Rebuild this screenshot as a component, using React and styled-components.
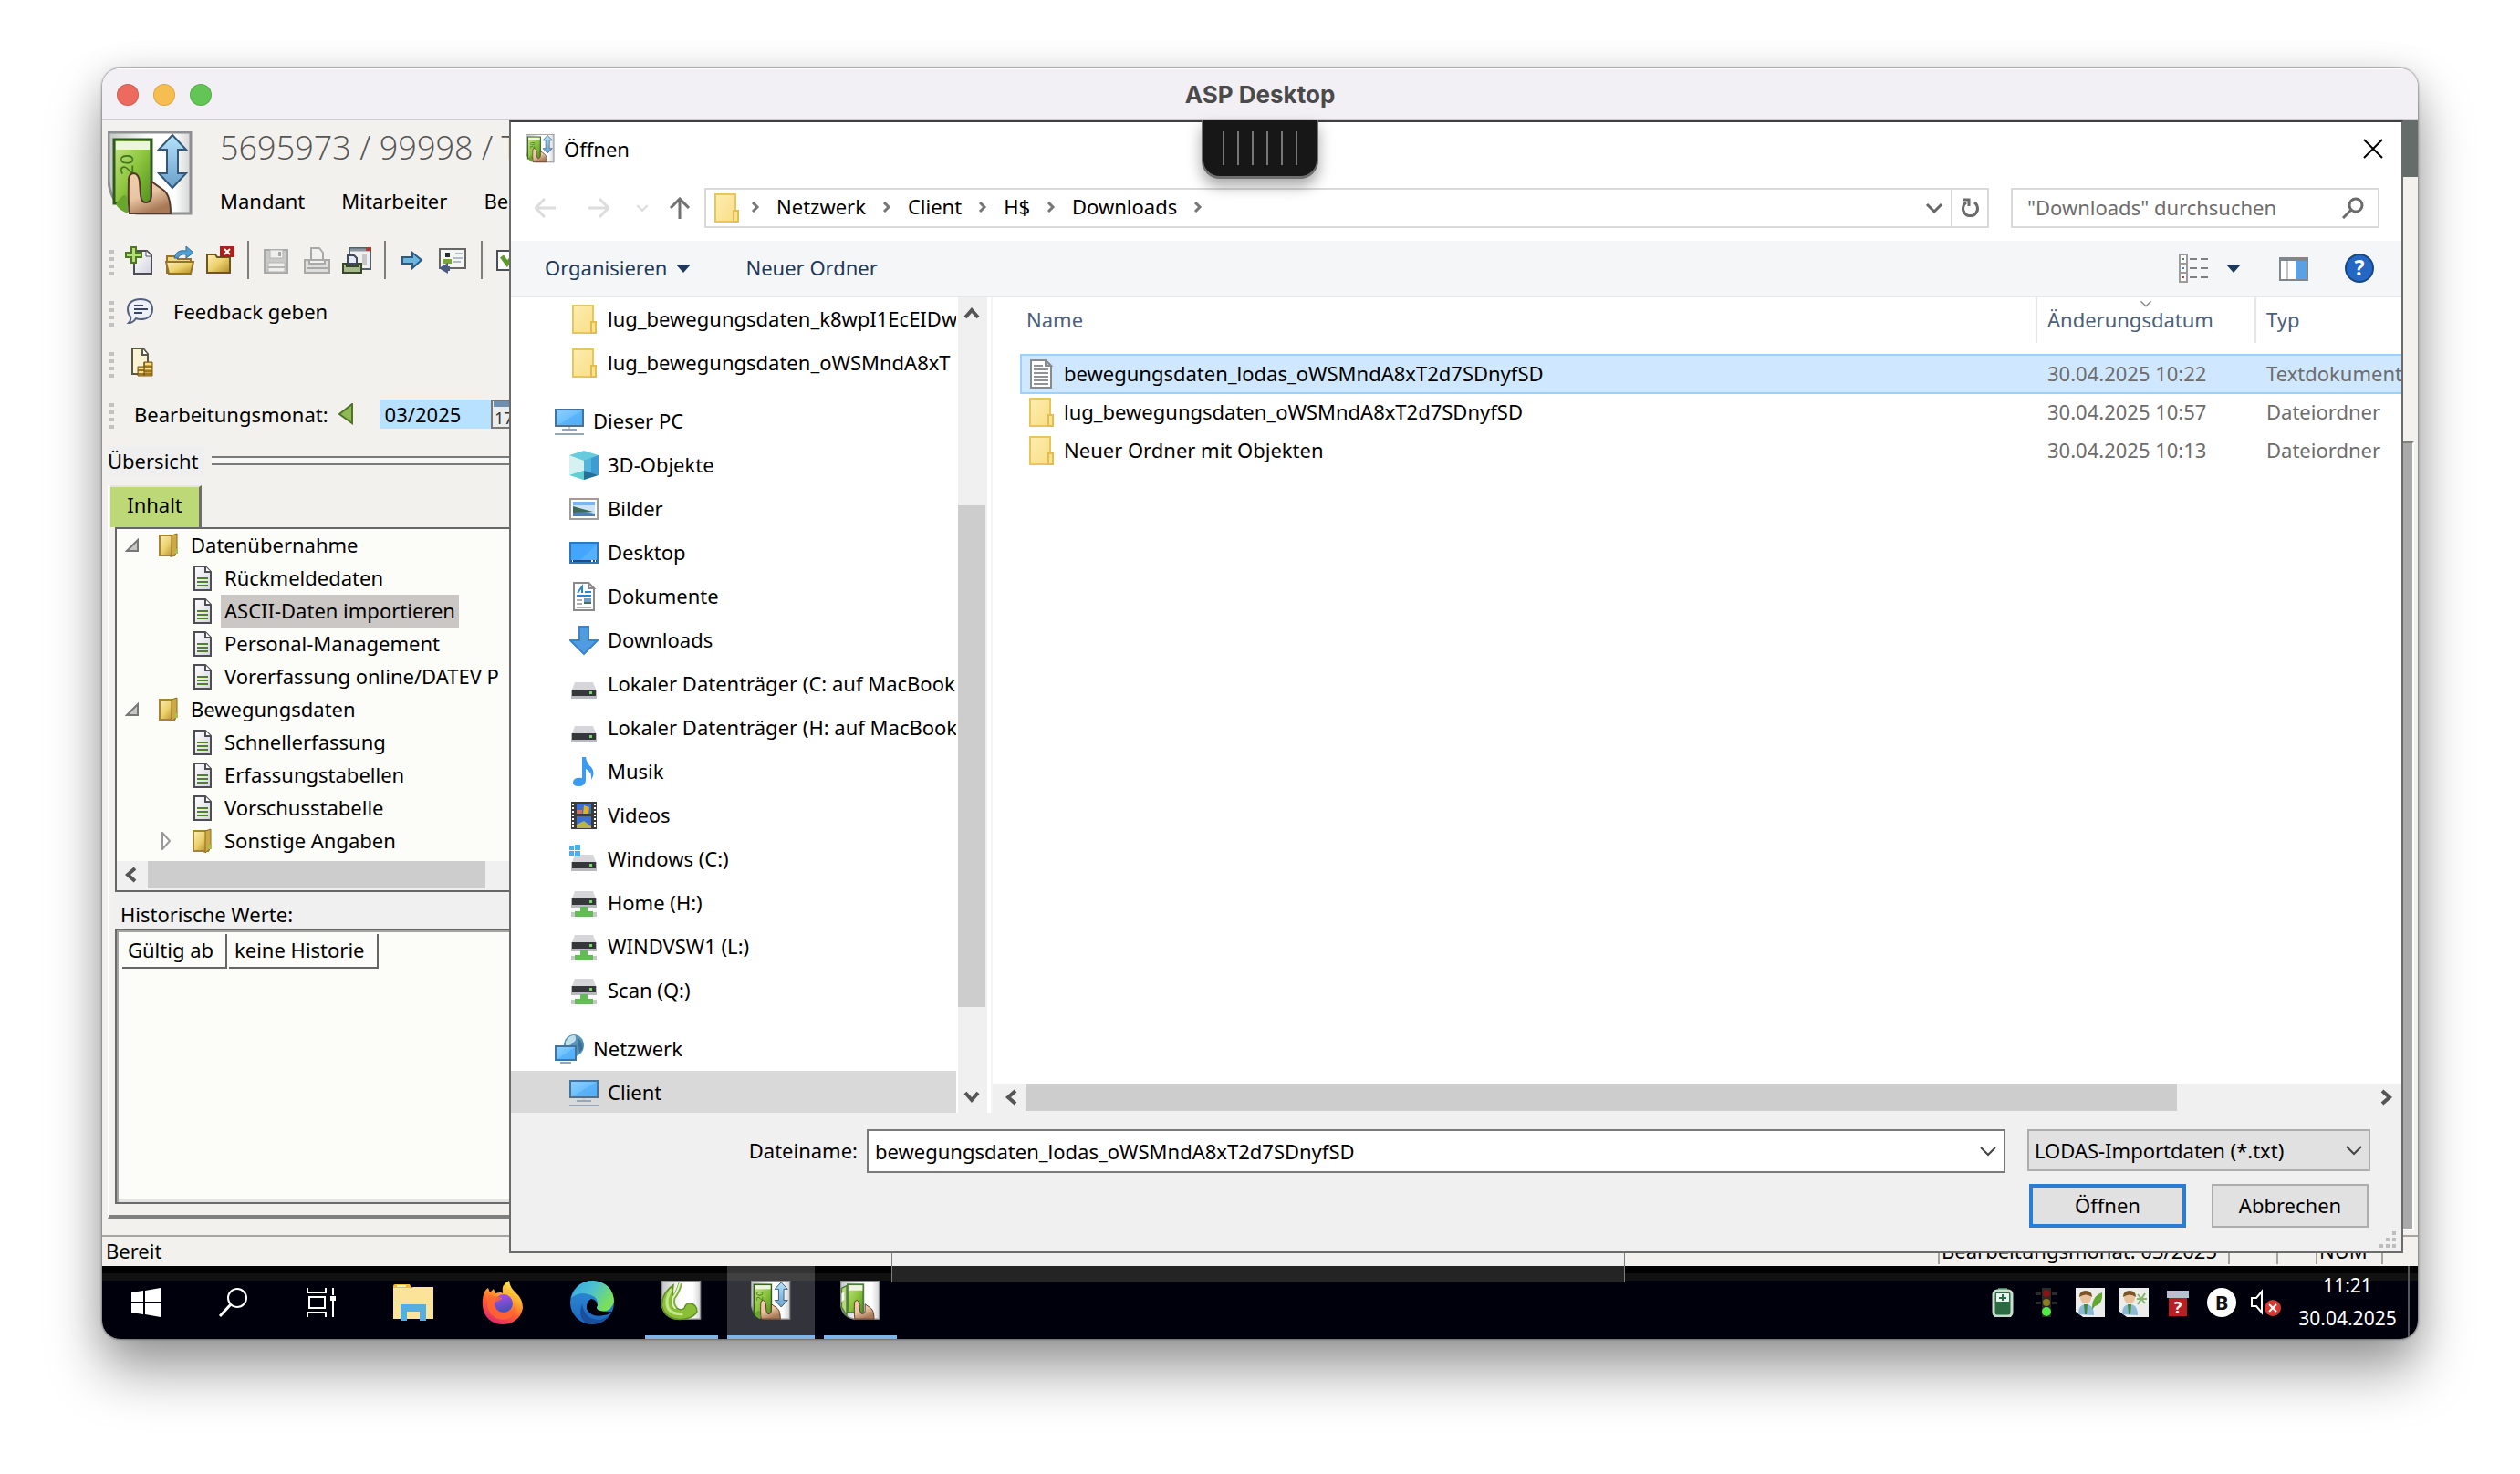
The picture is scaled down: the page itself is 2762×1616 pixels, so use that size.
import React from "react";
import styled, { createGlobalStyle, css } from "styled-components";

const UI_FONT = `"Noto Sans", "Open Sans", sans-serif`;

const GlobalStyle = createGlobalStyle`
  *, *::before, *::after { box-sizing: border-box; }
  body {
    margin: 0;
    background: #fff;
    font-family: ${UI_FONT};
    font-size: 22px;
    line-height: 32px;
    color: #000;
  }
  button, input, select {
    font: inherit;
    color: inherit;
    margin: 0;
    padding: 0;
    border: 0;
    border-radius: 0;
    background: none;
    outline: none;
  }
  ul { margin: 0; padding: 0; list-style: none; }
  svg { display: block; flex: none; }
`;

/* ---------- Icons ---------- */

const Defs = () => (
  <svg width="0" height="0" style={{ position: "absolute" }} aria-hidden="true">
    <defs>
      <linearGradient id="note" x1="0" y1="0" x2="1" y2="1">
        <stop offset="0" stopColor="#c5e48a" />
        <stop offset="0.5" stopColor="#8fc63f" />
        <stop offset="1" stopColor="#4f8f1e" />
      </linearGradient>
      <linearGradient id="skin" x1="0" y1="0" x2="0.4" y2="1">
        <stop offset="0" stopColor="#f3cfae" />
        <stop offset="0.6" stopColor="#e8c4a2" />
        <stop offset="1" stopColor="#a97a58" />
      </linearGradient>
      <linearGradient id="steel" x1="0" y1="0" x2="1" y2="0">
        <stop offset="0" stopColor="#c6c7c7" />
        <stop offset="0.5" stopColor="#ffffff" />
        <stop offset="0.8" stopColor="#ffffff" />
        <stop offset="1" stopColor="#d4d5d6" />
      </linearGradient>
      <linearGradient id="sky" x1="0" y1="0" x2="0" y2="1">
        <stop offset="0" stopColor="#b5e3fb" />
        <stop offset="1" stopColor="#6a9fc9" />
      </linearGradient>
      <linearGradient id="gold" x1="0" y1="0" x2="1" y2="1">
        <stop offset="0" stopColor="#fbeebb" />
        <stop offset="0.5" stopColor="#ecd16c" />
        <stop offset="1" stopColor="#b08a2a" />
      </linearGradient>
      <linearGradient id="paper" x1="0" y1="0" x2="1" y2="1">
        <stop offset="0" stopColor="#ffffff" />
        <stop offset="1" stopColor="#d3d3e0" />
      </linearGradient>
      <linearGradient id="folder" x1="0" y1="0" x2="1" y2="1">
        <stop offset="0" stopColor="#ffedb0" />
        <stop offset="1" stopColor="#f8de86" />
      </linearGradient>
      <linearGradient id="screen" x1="0" y1="0" x2="1" y2="1">
        <stop offset="0" stopColor="#8fd0ff" />
        <stop offset="0.5" stopColor="#6fc0fd" />
        <stop offset="0.52" stopColor="#5ab4fa" />
        <stop offset="1" stopColor="#4fadf8" />
      </linearGradient>
      <linearGradient id="fox" x1="0.8" y1="0" x2="0.3" y2="1">
        <stop offset="0" stopColor="#fff15a" />
        <stop offset="0.35" stopColor="#ffb02e" />
        <stop offset="0.65" stopColor="#ff5a36" />
        <stop offset="1" stopColor="#e0266f" />
      </linearGradient>
      <linearGradient id="foxcore" x1="0" y1="0" x2="0.3" y2="1">
        <stop offset="0" stopColor="#b44df0" />
        <stop offset="1" stopColor="#4a4fb8" />
      </linearGradient>
      <linearGradient id="edgetop" x1="0" y1="0" x2="1" y2="0.5">
        <stop offset="0" stopColor="#36a8ea" />
        <stop offset="0.5" stopColor="#4cc0d0" />
        <stop offset="1" stopColor="#7be05a" />
      </linearGradient>
      <linearGradient id="edgeside" x1="0" y1="0" x2="0" y2="1">
        <stop offset="0" stopColor="#2f93dc" />
        <stop offset="1" stopColor="#1c64bd" />
      </linearGradient>
    </defs>
  </svg>
);

const hand = (
  <path
    d="M24 90C22 78 23 62 23 52Q24 46 29 46Q34 47 35 55L36 70Q37 79 43 78Q48 77 48 70V55L62 65Q69 71 69 90Z"
    fill="url(#skin)"
    stroke="#54382a"
    strokeWidth="2"
  />
);
const frame = <path d="M1 1H91V90H32Q3 84 1 54Z" fill="url(#steel)" stroke="#8e8f90" strokeWidth="3" />;
const folderTall = (
  <>
    <path d="M4 1H26V31H4Z" fill="url(#folder)" stroke="#e8c65c" strokeWidth="2" />
    <path d="M24 19H29V31H24Z" fill="#fae294" stroke="#e3bd4d" strokeWidth="2" />
  </>
);
const monitor = (
  <>
    <path d="M1 3H31V21H1Z" fill="url(#screen)" stroke="#42749e" strokeWidth="2" />
    <path d="M8 25H24M0 30H32" stroke="#96a5ba" strokeWidth="2" />
    <path d="M15 22H17V24H15Z" fill="#c5ccd6" />
  </>
);
const drive = (y) => (
  <g transform={`translate(0 ${y})`}>
    <path d="M6 0H26L29 8H3Z" fill="#d6d6da" />
    <path d="M2 8H30V18H2Z" fill="#b9babf" />
    <path d="M3 8H29V15H3Z" fill="#35373a" />
    <path d="M22 10H25V13H22Z" fill="#6fe05a" />
  </g>
);
const person = (
  <>
    <path d="M0 0H32V32H8L0 26Z" fill="#ececea" />
    <path d="M3 29Q3 18 11 18Q20 18 20 30Z" fill="#8bb8d8" />
    <path d="M9 18H13L12 29H10Z" fill="#3d8b37" />
    <circle cx="11" cy="11" r="6" fill="#e9c29c" />
    <path d="M4 10Q4 3 11 3Q18 3 18 10Q11 5 4 10Z" fill="#7a5326" />
  </>
);

const ART = {
  lodas: [94, (
    <>
      {frame}
      <rect x="7" y="9" width="41" height="70" fill="url(#note)" stroke="#2f5a1e" strokeWidth="3" />
      <rect x="9" y="11" width="37" height="9" fill="#eef5df" />
      <path d="M9 80Q24 56 22 90Q12 86 9 80Z" fill="#6aa62e" />
      <text x="0" y="0" transform="translate(28 48) rotate(-90)" fontSize="20" fill="#3f7720">20</text>
      {hand}
      <path d="M71 4L86 20H77V46H86L71 62L56 46H65V20H56Z" fill="url(#sky)" stroke="#35587a" strokeWidth="2" />
    </>
  )],
  lohn: [94, (
    <>
      {frame}
      <path d="M3 18L15 12V82L3 62Z" fill="#b5d87c" stroke="#4d7a33" strokeWidth="3" />
      <path d="M3 30L9 26V44L3 50Z" fill="#fff" />
      <rect x="17" y="9" width="37" height="66" fill="url(#note)" stroke="#4f7c43" strokeWidth="4" />
      <rect x="19" y="11" width="33" height="12" fill="#eef5df" />
      <g transform="translate(10 0)">{hand}</g>
    </>
  )],
  swirl: [94, (
    <>
      {frame}
      <path
        d="M28 10Q0 30 1 58Q6 88 42 91Q72 90 83 74Q84 58 70 54Q56 52 54 64Q46 72 36 64Q22 48 28 10Z"
        fill="#8abf35"
        stroke="#5d8f22"
        strokeWidth="3"
      />
      <path d="M24 20Q6 44 16 66Q26 80 50 78" fill="none" stroke="#c3e58a" strokeWidth="7" />
      <path d="M44 6Q40 26 28 40Q24 58 34 66" fill="none" stroke="#7fb040" strokeWidth="10" />
      <path d="M43 6Q38 26 27 40Q23 58 33 66" fill="none" stroke="#e6f4cc" strokeWidth="4" />
    </>
  )],
  newDoc: [32, (
    <>
      <path d="M10 6H24L29 11V31H10Z" fill="url(#paper)" stroke="#4d4d57" strokeWidth="2" />
      <path d="M23 6V12H29" fill="#fff" stroke="#4d4d57" />
      <path d="M7 2H12V8H18V13H12V19H7V13H1V8H7Z" fill="#b7dd7a" stroke="#4c7a1f" strokeWidth="2" />
    </>
  )],
  openFolder: [32, (
    <>
      <path d="M2 12H12L14 15H28V30H2Z" fill="#f0d67e" stroke="#94742a" strokeWidth="2" />
      <path d="M1 18H31L28 31H4Z" fill="url(#gold)" stroke="#94742a" strokeWidth="2" />
      <path d="M10 14Q12 4 23 6V1L31 8L23 14V10Q16 9 14 14Z" fill="#4ea0d4" stroke="#2b6c9c" />
    </>
  )],
  closeFolder: [32, (
    <>
      <path d="M2 10H11L13 13H27V30H2Z" fill="url(#gold)" stroke="#6f5616" strokeWidth="2" />
      <path d="M16 1H32V13H16Z" fill="#a91f1b" />
      <path d="M21 4L27 10M27 4L21 10" stroke="#fff" strokeWidth="2" />
    </>
  )],
  save: [32, (
    <>
      <path d="M3 5H28V30H3Z" fill="#c9c9c8" stroke="#a9a9a8" strokeWidth="2" />
      <path d="M9 5H23V14H9ZM7 19H25V29H7Z" fill="#efefee" stroke="#b5b5b4" />
      <path d="M18 7H21V12H18Z" fill="#a9a9a8" />
      <path d="M7 24H25" stroke="#b5b5b4" strokeWidth="2" />
    </>
  )],
  print: [32, (
    <>
      <path d="M10 16V3H19L23 8V16Z" fill="#f1f1f0" stroke="#a9a9a8" strokeWidth="2" />
      <path d="M3 16H8V20H25V16H30V30H3Z" fill="#dededd" stroke="#a9a9a8" strokeWidth="2" />
      <path d="M5 25H28" stroke="#a9a9a8" strokeWidth="2" />
    </>
  )],
  printPreview: [32, (
    <>
      <path d="M8 3H31V26H8Z" fill="#f0f0f0" stroke="#52606a" strokeWidth="2" />
      <path d="M9 5H30" stroke="#8c97a0" strokeWidth="3" />
      <path d="M26 2H32V6H26Z" fill="#b03a35" />
      <path d="M22 10H27V22H22Z" fill="#c6c6c6" />
      <path d="M6 20V11H13L16 14V20Z" fill="#e6ebf5" stroke="#3f485c" strokeWidth="2" />
      <path d="M1 20H5V23H17V20H21V30H1Z" fill="#a5b98a" stroke="#37472b" strokeWidth="2" />
    </>
  )],
  arrowRight: [32, (
    <path d="M4 13H15V8L25 16L15 25V20H4Z" fill="#6db5df" stroke="#2d5a80" strokeWidth="2" />
  )],
  card: [32, (
    <>
      <path d="M1 4H29V25H1Z" fill="#f4f6f4" stroke="#666" strokeWidth="2" />
      <path d="M7 8H12V13H7Z" fill="#262b35" />
      <path d="M5 15H14V20H5Z" fill="#79a63c" />
      <path d="M18 9H26M16 14H26M16 18H24" stroke="#b4bcc8" strokeWidth="2" />
      <path d="M0 25L10 19V23H12V28H10V31Z" fill="#4b5a80" />
    </>
  )],
  checkDoc: [32, (
    <>
      <path d="M2 6H28V27H2Z" fill="#fff" stroke="#4b4f57" strokeWidth="2" />
      <path d="M7 12L13 20L23 8" fill="none" stroke="#5f9a2d" strokeWidth="5" />
    </>
  )],
  feedback: [32, (
    <>
      <path
        d="M17 3C25 3 30 7 30 14C30 21 25 25 17 25Q14 25 12 24Q9 29 4 29Q7 26 6 22Q3 19 3 14C3 7 9 3 17 3Z"
        fill="#eef1f8"
        stroke="#55617f"
        strokeWidth="2"
      />
      <path d="M10 10H20M10 14H25M10 18H19" stroke="#3a4668" strokeWidth="2" />
    </>
  )],
  coins: [32, (
    <>
      <path d="M8 1H20L25 7V29H8Z" fill="#fbf4d4" stroke="#5c5848" strokeWidth="2" />
      <path d="M19 1V8H25" fill="#fff" stroke="#5c5848" strokeWidth="2" />
      <path d="M14 21H21V16H30V31H14Z" fill="#cda33a" stroke="#7b5c18" />
      <path d="M15 23H21M22 18H29M15 27H21M22 23H29" stroke="#f4df8e" strokeWidth="2" />
      <path d="M14 25H21M21 16V31M21 21H30M14 29H30M21 26H30" stroke="#6b4c0c" />
    </>
  )],
  triangleLeft: [24, <path d="M18 1V22L4 12Z" fill="#8dba55" stroke="#507527" strokeWidth="2" />],
  calendar: [32, (
    <>
      <path d="M1 1H31V31H1Z" fill="#ececec" stroke="#777" strokeWidth="2" />
      <path d="M3 2H30V8H3Z" fill="#6f8fae" />
      <text x="4" y="27" fontSize="18" fill="#333">17</text>
    </>
  )],
  treeFolder: [28, (
    <>
      <path d="M15 3L22 2V25L15 27Z" fill="#9cbf4e" />
      <path d="M4 3H20V25H4Z" fill="url(#gold)" stroke="#a58532" strokeWidth="2" />
      <path d="M17 3L23 1V22L17 27Z" fill="#cda943" stroke="#8c6d22" />
      <path d="M21 18H24V23H21Z" fill="#a4bf52" />
    </>
  )],
  treeDoc: [28, (
    <>
      <path d="M5 1H17L23 7V27H5Z" fill="url(#paper)" stroke="#4e4e52" strokeWidth="2" />
      <path d="M17 1V7H23" fill="#fff" stroke="#4e4e52" strokeWidth="2" />
      <path d="M8 14H20M8 18H20M8 22H20" stroke="#55802b" strokeWidth="2" />
    </>
  )],
  treeOpen: [16, <path d="M14 2V14H2Z" fill="#c7c7c5" stroke="#777" strokeWidth="2" />],
  treeClosed: [20, <path d="M6 1L14 10L6 19Z" fill="#fff" stroke="#999" strokeWidth="2" />],
  folder: [32, folderTall],
  monitor: [32, monitor],
  textFile: [32, (
    <>
      <path d="M5 1H21L27 7V31H5Z" fill="#fff" stroke="#8a8a8a" strokeWidth="2" />
      <path d="M21 1V7H27Z" fill="#ddd" stroke="#8a8a8a" strokeWidth="2" />
      <path d="M8 7H18M8 11H24M8 15H24M8 19H24M8 23H24M8 27H24" stroke="#8f9396" strokeWidth="2" />
    </>
  )],
  objects3d: [32, (
    <>
      <path d="M16 0L32 5V26L16 32L0 26V5Z" fill="#66cbdc" />
      <path d="M0 5L16 11V22L0 27Z" fill="#d5f1f2" />
      <path d="M32 5L16 11V22L32 27Z" fill="#3f9bd3" />
      <path d="M16 11V22L24 24V8Z" fill="#52b6dc" />
      <path d="M16 22L32 27L16 32Z" fill="#256f96" />
      <path d="M16 22L0 27L16 32Z" fill="#5fcfd2" />
    </>
  )],
  pictures: [32, (
    <>
      <path d="M1 5H31V27H1Z" fill="#fff" stroke="#9d9d9d" strokeWidth="2" />
      <path d="M4 8H28V24H4Z" fill="#cfe3f6" />
      <path d="M4 8H28V12H4Z" fill="#7db4f2" />
      <path d="M4 13Q14 16 26 19L4 21Z" fill="#3f6b55" />
      <path d="M4 20Q16 18 28 21V24H4Z" fill="#4d7fb3" />
    </>
  )],
  desktop: [32, (
    <>
      <path d="M1 5H31V27H1Z" fill="#44a5fb" stroke="#2b78bd" strokeWidth="2" />
      <path d="M30 7V24H12Z" fill="#58b0fb" />
      <path d="M2 25H30" stroke="#1c4f80" strokeWidth="2" />
      <path d="M3 24H4V26H3ZM24 24H26V26H24ZM28 24H29V26H28Z" fill="#fff" />
    </>
  )],
  documents: [32, (
    <>
      <path d="M5 1H21L27 7V31H5Z" fill="#fff" stroke="#8a8a8a" strokeWidth="2" />
      <path d="M21 1V7H27Z" fill="#ddd" stroke="#8a8a8a" strokeWidth="2" />
      <path d="M9 12L14 5V12M17 11H24M8 15H24" stroke="#2f86cf" strokeWidth="2" fill="none" />
      <path d="M8 20H14M8 24H14M8 28H24" stroke="#b0b0b0" strokeWidth="2" />
      <path d="M16 18H24V24H16Z" fill="#6f9fc4" />
      <path d="M16 22H24V24H16Z" fill="#47705a" />
    </>
  )],
  download: [32, <path d="M11 1H21V16H31L16 31L1 16H11Z" fill="#4f9be4" stroke="#3d83c9" strokeWidth="2" />],
  drive: [32, drive(14)],
  music: [32, (
    <path
      d="M14 0H18Q19 7 24 11Q29 17 24 25Q25 16 18 13V26Q17 32 10 32Q4 32 4 28Q4 22 14 23Z"
      fill="#3b9bf2"
    />
  )],
  video: [32, (
    <>
      <path d="M2 1H30V31H2Z" fill="#3b3b3b" />
      <path d="M8 3H24V14H8ZM8 17H24V30H8Z" fill="#3d6fd0" />
      <path d="M4 3V30M28 3V30" stroke="#fff" strokeWidth="2" strokeDasharray="2 2" />
      <path d="M16 5L22 7L21 14H15Z" fill="#d8b628" />
      <path d="M8 10H14V14H8Z" fill="#c7766d" />
      <path d="M8 26L16 22L24 28V30H8Z" fill="#b9b447" />
    </>
  )],
  winDrive: [32, (
    <>
      {drive(11)}
      <path d="M0 1H5V6H0ZM6 0H12V6H6ZM0 7H5V12H0ZM6 7H12V13H6Z" fill="#43b4ea" />
    </>
  )],
  netDrive: [32, (
    <>
      {drive(3)}
      <path d="M12 20H20V26H12Z" fill="#63bd55" />
      <path d="M2 26H30V31H2Z" fill="#c5c7c8" />
      <path d="M6 25H26V31H6Z" fill="#63bd55" />
    </>
  )],
  network: [32, (
    <>
      <ellipse cx="21" cy="12" rx="11" ry="12" fill="#5795b8" />
      <path d="M12 8Q16 0 22 1Q25 6 20 9Q17 13 12 12Z" fill="#bfe0e8" />
      <path d="M25 4Q31 8 31 16L27 20Z" fill="#3c7396" />
      <path d="M1 13H23V28H1Z" fill="url(#screen)" stroke="#42749e" strokeWidth="2" />
      <path d="M6 31H18" stroke="#96a5ba" strokeWidth="2" />
    </>
  )],
  back: [24, <path d="M23 12H2M11 2L1 12L11 22" fill="none" stroke="#dcdcdc" strokeWidth="3" />],
  forward: [24, <path d="M1 12H22M13 2L23 12L13 22" fill="none" stroke="#dcdcdc" strokeWidth="3" />],
  up: [24, <path d="M12 24V2M2 12L12 2L22 12" fill="none" stroke="#717171" strokeWidth="3" />],
  chevronRight: [12, <path d="M3 1L8 6L3 11" fill="none" stroke="#777" strokeWidth="3" />],
  chevronDown: [20, <path d="M2 6L10 14L18 6" fill="none" stroke="currentColor" strokeWidth="3" />],
  comboDown: [20, <path d="M2 6L10 14L18 6" fill="none" stroke="currentColor" strokeWidth="2" />],
  chevronUp: [20, <path d="M3 14L10 6L17 14" fill="none" stroke="currentColor" strokeWidth="4" />],
  chevronLeft: [20, <path d="M14 3L6 10L14 17" fill="none" stroke="currentColor" strokeWidth="4" />],
  scrollRight: [20, <path d="M6 3L14 10L6 17" fill="none" stroke="currentColor" strokeWidth="4" />],
  scrollDown: [20, <path d="M3 6L10 14L17 6" fill="none" stroke="currentColor" strokeWidth="4" />],
  caret: [16, <path d="M0 4H16L8 13Z" fill="#1e395b" />],
  refresh: [24, (
    <>
      <path d="M17 6A8 8 0 1 1 8 6" fill="none" stroke="#6b6b6b" strokeWidth="3" />
      <path d="M4 3H11V10" fill="none" stroke="#6b6b6b" strokeWidth="3" />
    </>
  )],
  search: [24, (
    <>
      <circle cx="15" cy="9" r="7" fill="none" stroke="#6b6b6b" strokeWidth="3" />
      <path d="M10 14L1 23" stroke="#6b6b6b" strokeWidth="3" />
    </>
  )],
  close: [22, <path d="M1 1L21 21M21 1L1 21" stroke="#000" strokeWidth="2" />],
  list: [32, (
    <>
      <path d="M1 1H9V31H1ZM1 11H9M1 21H9" fill="#fff" stroke="#9b9b9b" strokeWidth="2" />
      <path d="M4 5H6V7H4Z" fill="#4f8a5f" />
      <path d="M4 15H6V17H4Z" fill="#3f7fe0" />
      <path d="M4 25H6V27H4Z" fill="#c8322b" />
      <path d="M12 6H20M24 6H32M12 16H20M24 16H32M12 26H20M24 26H32" stroke="#7f7f7f" strokeWidth="2" />
    </>
  )],
  pane: [32, (
    <>
      <path d="M1 5H31V29H1Z" fill="#fff" stroke="#7f868c" strokeWidth="2" />
      <path d="M0 6H32" stroke="#7f868c" strokeWidth="4" />
      <path d="M18 8H30V28H18Z" fill="#5aa1e3" />
      <path d="M9 8V28" stroke="#c2c2c2" strokeWidth="2" />
    </>
  )],
  help: [32, (
    <>
      <circle cx="16" cy="16" r="15" fill="#2467c4" stroke="#154780" strokeWidth="2" />
      <text x="16" y="24" textAnchor="middle" fontSize="23" fontWeight="700" fill="#fff">?</text>
    </>
  )],
  windows: [32, <path d="M0 5L13 3V15H0ZM15 3L32 0V15H15ZM0 17H13V29L0 27ZM15 17H32V32L15 29Z" fill="#fff" />],
  magnifier: [34, (
    <>
      <circle cx="21" cy="12" r="10" fill="none" stroke="#fff" strokeWidth="2" />
      <path d="M14 19L2 32" stroke="#fff" strokeWidth="3" />
    </>
  )],
  taskView: [32, (
    <>
      <path d="M1 0V5H21V0M3 10H20V22H3ZM1 32V27H21V32M29 0V8M29 14V32" fill="none" stroke="#fff" strokeWidth="2" />
      <path d="M26 9H32V14H26Z" fill="#fff" />
    </>
  )],
  explorer: [44, (
    <>
      <path d="M0 4Q0 2 2 2H18L20 6H0Z" fill="#f5b92f" />
      <path d="M0 6H18L22 5H44V40H0Z" fill="#fbe39a" />
      <path d="M8 24H36V42H29V32H15V42H8Z" fill="#54aee0" />
      <path d="M4 4H14" stroke="#fff3c8" strokeWidth="2" />
    </>
  )],
  firefox: [48, (
    <>
      <path
        d="M2 28C1 18 4 10 8 8L10 13L14 9L16 14Q22 12 24 14Q22 4 31 0Q32 8 38 13Q46 20 46 30C44 42 34 48 24 48C12 48 3 40 2 28Z"
        fill="url(#fox)"
      />
      <circle cx="25" cy="25" r="10" fill="url(#foxcore)" />
      <path d="M8 17Q16 16 24 19Q20 23 14 24Q14 34 25 36Q34 36 37 28Q40 36 32 41Q20 46 11 37Q5 28 8 17Z" fill="#ff6a30" opacity="0.75" />
    </>
  )],
  edge: [50, (
    <>
      <circle cx="25" cy="25" r="24" fill="url(#edgeside)" />
      <path d="M14 26Q16 44 34 44Q42 42 46 37Q36 50 22 49Q8 44 14 26Z" fill="#1a4f9c" />
      <path d="M2 20Q8 1 26 1Q48 3 49 24Q46 36 34 34Q28 32 31 28Q32 20 24 17Q12 12 2 20Z" fill="url(#edgetop)" />
      <path d="M24 21Q18 24 19 32Q24 42 38 39Q44 38 47 35Q40 36 33 34Q28 32 31 28Q30 22 24 21Z" fill="#00000c" />
    </>
  )],
  battery: [32, (
    <>
      <path d="M11 0H21V4H11Z" fill="#3c8559" />
      <rect x="6" y="3" width="20" height="28" rx="4" fill="#2a6b42" stroke="#c8dfd0" strokeWidth="3" />
      <path d="M9 6H23V15H9Z" fill="#eaf4ee" />
      <path d="M16 7V14M12 11H20" stroke="#2a6b42" strokeWidth="2" />
    </>
  )],
  traffic: [32, (
    <>
      <path d="M4 5H10V8H4ZM22 5H28V8H22ZM4 15H10V18H4ZM22 15H28V18H22Z" fill="#2c2c2c" />
      <path d="M11 0H21V32H11Z" fill="#2b2b2b" />
      <circle cx="16" cy="6" r="4" fill="#8a1414" />
      <circle cx="16" cy="16" r="4" fill="#8a7d20" />
      <circle cx="16" cy="26" r="5" fill="#50ee44" />
    </>
  )],
  userLeaf: [32, <>{person}<path d="M18 20Q19 8 29 5Q30 18 21 20L18 24Z" fill="#62a82f" /></>],
  userNet: [32, (
    <>
      {person}
      <path d="M20 7L28 17M28 6L20 18M19 12H30" stroke="#86b56e" strokeWidth="2" />
    </>
  )],
  question: [32, (
    <>
      <path d="M4 3H28V11H4Z" fill="#b9bfd0" />
      <path d="M6 11H26V31H6Z" fill="#b81f22" />
      <text x="16" y="28" textAnchor="middle" fontSize="18" fontWeight="700" fill="#fff">?</text>
    </>
  )],
  bluetooth: [32, (
    <>
      <circle cx="16" cy="16" r="16" fill="#fff" />
      <text x="16" y="24" textAnchor="middle" fontSize="22" fontWeight="700" fill="#111">B</text>
    </>
  )],
  muted: [34, (
    <>
      <path d="M2 12H7L13 5V28L7 21H2Z" fill="none" stroke="#fff" strokeWidth="2" />
      <circle cx="25" cy="23" r="9" fill="#d23a32" />
      <path d="M21 19L29 27M29 19L21 27" stroke="#fff" strokeWidth="2" />
    </>
  )],
  sizeGrip: [20, (
    <path
      d="M14 0H18V4H14ZM7 7H11V11H7ZM14 7H18V11H14ZM0 14H4V18H0ZM7 14H11V18H7ZM14 14H18V18H14Z"
      fill="#bdbdbd"
    />
  )],
};

const Icon = ({ name, size }) => {
  const [box, art] = ART[name];
  const px = size || box;
  return (
    <svg width={px} height={px} viewBox={`0 0 ${box} ${box}`} aria-hidden="true">
      {art}
    </svg>
  );
};

/* Text next to an icon sits slightly above the icon's centre line. */
const Label = styled.span`
  padding-bottom: 3px;
`;

/* ---------- Mac window ---------- */

const Page = styled.div`
  display: flex;
  min-height: 100vh;
  padding: 75px 112px 148px;
`;

const MacWindow = styled.main`
  flex: 1;
  display: flex;
  flex-direction: column;
  min-width: 0;
  border-radius: 20px;
  overflow: hidden;
  background: #f3f1ed;
  box-shadow: 0 0 2px 1px rgba(0, 0, 0, 0.35), 0 36px 60px rgba(0, 0, 0, 0.36), 0 6px 40px rgba(0, 0, 0, 0.14);
`;

const MacTitleBar = styled.header`
  display: grid;
  grid-template-columns: 1fr auto 1fr;
  align-items: center;
  height: 57px;
  padding: 0 16px;
  background: #f2f0f5;
  border-top: 1px solid #fff;
  border-bottom: 1px solid #cfcdd1;
`;

const TrafficLights = styled.div`
  display: flex;
  gap: 16px;
`;

const Light = styled.button`
  width: 24px;
  height: 24px;
  border-radius: 50%;
  background: ${(p) => p.$color};
  box-shadow: inset 0 0 0 1px rgba(0, 0, 0, 0.12);
`;

const MacTitle = styled.h1`
  margin: 0;
  font: 700 26px/32px Inter, sans-serif;
  color: #4a4a4a;
`;

const RemoteScreen = styled.div`
  position: relative;
  flex: 1;
  display: flex;
  flex-direction: column;
`;

/* ---------- Payroll application ---------- */

const AppWindow = styled.section`
  flex: 1;
  display: flex;
  flex-direction: column;
  background: #f3f1ed;
`;

const AppHeader = styled.div`
  display: flex;
  gap: 29px;
  height: 128px;
  padding-left: 6px;
`;

const Logo = styled.div`
  padding-top: 12px;
`;

const HeaderText = styled.div`
  flex: 1;
  padding-top: 6px;
`;

const ClientTitle = styled.div`
  font-family: "Open Sans", sans-serif;
  font-size: 36px;
  font-weight: 300;
  line-height: 48px;
  color: #555;
`;

const MenuBar = styled.nav`
  display: flex;
  gap: 40px;
  padding-top: 18px;
`;

const CaptionEdge = styled.div`
  width: 16px;
  height: 62px;
  background: #666c69;
`;

const ToolRow = styled.div`
  display: flex;
  align-items: center;
  height: 56px;
  padding-left: 8px;
`;

const Grip = styled.span`
  width: 5px;
  height: 28px;
  margin-right: 6px;
  background: repeating-linear-gradient(#c3c2bf 0 4px, transparent 4px 8px);
`;

const ToolGroup = styled.div`
  display: flex;
  align-items: center;
  padding-bottom: 6px;
`;

const ToolButton = styled.button`
  display: flex;
  align-items: center;
  gap: 21px;
  padding: 0 6px;
`;

const ToolDivider = styled.span`
  width: 2px;
  height: 42px;
  margin: 0 8px;
  background: #7e7e7d;
`;

const MonthForm = styled.div`
  display: flex;
  align-items: center;
  padding: 0 0 4px 16px;
`;

const MonthButton = styled.button`
  display: flex;
  margin: 0 24px 0 8px;
`;

const MonthInput = styled.input`
  width: 122px;
  height: 32px;
  padding: 0 6px;
  background: #b8e0ff;
`;

const CalendarButton = styled.button`
  display: flex;
`;

const AppBody = styled.div`
  flex: 1;
  display: flex;
  margin: 0 4px 5px 6px;
`;

const Overview = styled.section`
  display: flex;
  flex-direction: column;
  width: 500px;
  padding-bottom: 13px;
`;

const OverviewHead = styled.div`
  display: flex;
  align-items: center;
  gap: 8px;
  height: 48px;
  padding-bottom: 6px;

  span { width: 106px; background: #efefef; }
  i { flex: 1; height: 10px; border: solid #7a7a7a; border-width: 2px 0; background: #f8f8f7; }
`;

const OverviewPanel = styled.div`
  flex: 1;
  display: flex;
  flex-direction: column;
  padding: 0 0 12px 6px;
  border-left: 2px solid #fff;
  border-bottom: 4px solid #7f7f7d;
`;

const Tab = styled.button`
  align-self: flex-start;
  width: 100px;
  height: 46px;
  margin-left: -5px;
  padding-bottom: 6px;
  background: #bcd877;
  border-top: 2px solid #e5e5e3;
  border-right: 3px solid #6d6d6d;
`;

const Tree = styled.ul`
  padding-bottom: 4px;
  background: #fcfcf9;
  border: solid #666;
  border-width: 2px 0 0 2px;
`;

const TreeRow = styled.li`
  display: flex;
  align-items: center;
  height: 36px;
  padding-left: ${(p) => p.$level * 37}px;
`;

const TreeToggle = styled.span`
  display: flex;
  justify-content: center;
  width: 34px;
  margin-right: 9px;
`;

const TreeLabel = styled.button`
  height: 36px;
  margin-left: 6px;
  padding: 0 4px 2px;
  white-space: nowrap;
  background: ${(p) => (p.$selected ? "#cac7c5" : "transparent")};
`;

const TreeScroll = styled.div`
  display: flex;
  height: 34px;
  padding: 0 0 2px 6px;
  align-items: stretch;
  background: #f0f0f0;
  color: #555;
  border: solid #666;
  border-width: 0 0 2px 2px;

  button { width: 28px; }
  i { width: 370px; background: #cdcdcd; }
`;

const HistoryLabel = styled.div`
  height: 40px;
  padding: 8px 0 0 6px;
  background: #f0f0f0;
`;

const HistoryBox = styled.div`
  flex: 1;
  background: #fcfcf9;
  border: solid #6a6a6a;
  border-width: 2px 0 2px 2px;
  box-shadow: inset 2px 2px 0 #a4a4a4, inset 0 -4px 0 #e4e4e2;
  padding: 4px 0 0 6px;
`;

const HistoryTable = styled.table`
  border-spacing: 2px 0;
  margin-left: -2px;

  th {
    height: 38px;
    padding: 0 13px 2px 6px;
    font-weight: 400;
    text-align: left;
    border: solid #666;
    border-width: 0 2px 2px 0;
  }
`;

const Workspace = styled.div`
  flex: 1;
  background: #a9a9a9;
  border: 2px solid #7f7f7f;
  border-color: #7f7f7f #fff #fff #7f7f7f;
`;

const StatusBar = styled.footer`
  display: flex;
  align-items: center;
  height: 34px;
  padding: 0 2px 2px 4px;
  border-top: 2px solid #a5a4a1;
`;

const StatusCell = styled.span`
  width: ${(p) => p.$w}px;
  height: 30px;
  padding-left: 2px;
  line-height: 30px;
  white-space: nowrap;
  border: solid #a5a4a1;
  border-width: 0 0 0 2px;
`;

const StatusMessage = styled.span`
  flex: 1;
  line-height: 30px;
`;

/* ---------- Overlays on the remote desktop ---------- */

const HiddenWindow = styled.div`
  position: absolute;
  left: 865px;
  bottom: 62px;
  width: 804px;
  height: 32px;
  background: linear-gradient(#f0f0f0 14px, #242424 14px);
  border: solid #7d7d7b;
  border-width: 0 1px;
`;

const ConnectionTab = styled.button`
  position: absolute;
  top: 0;
  left: calc(50% - 64px);
  display: flex;
  justify-content: center;
  gap: 14px;
  width: 128px;
  height: 64px;
  padding-top: 12px;
  background: #171717;
  border: solid #6f6f6f;
  border-width: 0 2px 3px;
  border-radius: 0 0 20px 20px;
  box-shadow: 0 8px 16px rgba(0, 0, 0, 0.35);

  i { width: 2px; height: 37px; background: #777; }
`;

/* ---------- Open dialog ---------- */

const Dialog = styled.section`
  position: absolute;
  top: 0;
  right: 16px;
  bottom: 94px;
  left: 446px;
  display: flex;
  flex-direction: column;
  background: #fff;
  border: 2px solid #6b6b6b;
  border-top-color: #3f3f41;
`;

const DialogTitle = styled.header`
  display: flex;
  align-items: center;
  gap: 10px;
  height: 58px;
  padding: 0 20px 0 16px;

  h2 { flex: 1; margin: 0; font-size: 22px; font-weight: 400; }
`;

const NavRow = styled.div`
  display: flex;
  align-items: center;
  height: 72px;
  padding: 0 24px 0 9px;
`;

const NavButton = styled.button`
  display: flex;
  justify-content: center;
  width: ${(p) => p.$w}px;
  color: ${(p) => p.$color || "#dcdcdc"};
`;

const fieldFrame = css`
  display: flex;
  align-items: center;
  height: 44px;
  border: 2px solid #d9d9d9;
  background: #fff;
`;

const AddressBar = styled.div`
  ${fieldFrame}
  flex: 1;
  margin: 0 24px 0 5px;
  padding-left: 6px;
`;

const Crumbs = styled.nav`
  flex: 1;
  display: flex;
  align-items: center;
  gap: 17px;
  padding: 0 0 3px 10px;
`;

const Crumb = styled.button`
  padding-bottom: 2px;
`;

const RefreshButton = styled.button`
  display: flex;
  align-items: center;
  justify-content: center;
  width: 40px;
  height: 40px;
  margin-left: 8px;
  border-left: 2px solid #d9d9d9;
`;

const SearchBox = styled.label`
  ${fieldFrame}
  width: 404px;
  padding: 0 15px 0 16px;

  input { flex: 1; min-width: 0; padding-bottom: 3px; }
  input::placeholder { color: #6d6d6d; opacity: 1; }
`;

const CommandBar = styled.div`
  display: flex;
  align-items: center;
  height: 62px;
  padding: 0 30px 0 37px;
  background: #f5f6f8;
  border-bottom: 2px solid #e6e8eb;
  color: #1e395b;
`;

const Command = styled.button`
  display: flex;
  align-items: center;
  gap: ${(p) => p.$gap || 10}px;
  margin-right: ${(p) => p.$after || 0}px;
`;

const Spacer = styled.span`
  flex: 1;
`;

const DialogBody = styled.div`
  flex: 1;
  display: flex;
  min-height: 0;
`;

const Places = styled.ul`
  width: 488px;
  margin-right: 2px;
  overflow: hidden;
`;

const Place = styled.li`
  height: 48px;
  margin-top: ${(p) => (p.$first ? 16 : 0)}px;
  background: ${(p) => (p.$selected ? "#d9d9d9" : "transparent")};

  button {
    display: flex;
    align-items: center;
    gap: 10px;
    width: 100%;
    height: 48px;
    padding-left: ${(p) => (p.$root ? 48 : 64)}px;
    white-space: nowrap;
    text-align: left;
  }
`;

const VScroll = styled.div`
  display: flex;
  flex-direction: column;
  align-items: stretch;
  width: 32px;
  padding: 8px 2px 8px 0;
  background: #f0f0f0;
  color: #555;

  button { display: flex; justify-content: center; }
  i { flex: 550; margin-top: 200px; margin-bottom: 88px; background: #cdcdcd; }
`;

const Files = styled.div`
  flex: 1;
  display: flex;
  flex-direction: column;
  min-width: 0;
  margin-left: 4px;
  border-left: 2px solid #f5f5f5;
`;

const FileTable = styled.table`
  flex: 1;
  display: block;
  padding-left: 30px;
  overflow: hidden;

  thead, tbody { display: block; }
  tr {
    display: grid;
    grid-template-columns: 1fr 240px 161px;
  }
  th, td { padding: 0; font-weight: 400; text-align: left; white-space: nowrap; }
`;

const ColumnHead = styled.th`
  && {
    position: relative;
    height: 50px;
    padding: 8px 0 0 ${(p) => (p.$divided ? 11 : 7)}px;
    color: #4c607a;
    border-left: ${(p) => (p.$divided ? "2px solid #e5e5e5" : "0")};
  }
  svg { position: absolute; top: 0; left: 112px; color: #888; }
`;

const FileRows = styled.tbody`
  padding-top: 12px;
`;

const FileRow = styled.tr`
  align-items: center;
  height: 44px;
  margin-bottom: -2px;
  ${(p) =>
    p.$selected &&
    css`
      background: #cfe8ff;
      box-shadow: inset 2px 0 0 #99d1ff, inset 0 2px 0 #99d1ff, inset 0 -2px 0 #99d1ff;
    `}
  td { color: #6d6d6d; padding: 0 0 3px 13px; }
  td:first-child {
    display: flex;
    align-items: center;
    gap: 9px;
    padding: 0 0 0 7px;
    color: #000;
  }
`;

const HScroll = styled.div`
  display: flex;
  align-items: center;
  height: 32px;
  padding: 0 2px 2px 6px;
  background: #f0f0f0;
  color: #555;

  button { display: flex; justify-content: center; width: 30px; }
  i { flex: 1262; height: 30px; margin-right: 214px; background: #cdcdcd; }
`;

const DialogFooter = styled.footer`
  position: relative;
  display: flex;
  flex-direction: column;
  gap: 12px;
  height: 152px;
  padding-top: 18px;
  background: #f0f0f0;
`;

const FooterRow = styled.div`
  display: flex;
  justify-content: flex-end;
  padding-right: ${(p) => p.$end}px;
  gap: ${(p) => p.$gap}px;
`;

const NameLabel = styled.label`
  width: 380px;
  line-height: 46px;
  text-align: right;
`;

const ComboBox = styled.div`
  flex: 1;
  display: flex;
  align-items: center;
  height: 48px;
  margin: 0 24px 0 10px;
  padding: 0 7px;
  background: #fff;
  border: 2px solid #7a7a7a;
  color: #444;

  input { flex: 1; color: #000; }
`;

const TypePicker = styled.div`
  position: relative;
  width: 376px;
  height: 46px;
  color: #444;

  select {
    appearance: none;
    width: 100%;
    height: 100%;
    padding: 0 6px;
    color: #000;
    background: #e1e1e1;
    border: 2px solid #adadad;
  }
  svg { position: absolute; top: 13px; right: 8px; pointer-events: none; }
`;

const DialogButton = styled.button`
  width: 172px;
  height: 48px;
  padding-bottom: 3px;
  background: #e1e1e1;
  border: ${(p) => (p.$primary ? "4px solid #2b7cd3" : "2px solid #adadad")};
`;

const SizeGrip = styled.span`
  position: absolute;
  right: 4px;
  bottom: 2px;
`;

/* ---------- Taskbar ---------- */

const Taskbar = styled.footer`
  display: flex;
  height: 80px;
  background: linear-gradient(#000 0 8px, #101110 8px 16px, #00000c 16px);
  color: #fff;
`;

const TaskGroup = styled.div`
  display: flex;
  gap: ${(p) => p.$gap || 0}px;
  margin-right: 5px;
`;

const TaskButton = styled.button`
  display: flex;
  align-items: center;
  justify-content: center;
  width: 96px;
  height: 80px;
  padding-bottom: ${(p) => (p.$open ? 4 : 0)}px;
  background: ${(p) => (p.$active ? "rgba(255, 255, 255, 0.2)" : "transparent")};
  background-image: ${(p) => (p.$open ? "linear-gradient(#7fb4e8, #7fb4e8)" : "none")};
  background-size: ${(p) => (p.$active ? 96 : 80)}px 4px;
  background-position: center bottom;
  background-repeat: no-repeat;
`;

const Tray = styled.div`
  display: flex;
  align-items: center;

  button { display: flex; justify-content: center; width: 48px; }
`;

const Clock = styled.time`
  width: 132px;
  padding-top: 3px;
  font-size: 21px;
  line-height: 36px;
  text-align: center;
`;

const ShowDesktop = styled.button`
  width: 11px;
  border-left: 2px solid #55555c;
`;

/* ---------- Data ---------- */

const TREE = [
  { label: "Datenübernahme", level: 0, icon: "treeFolder", toggle: "treeOpen" },
  { label: "Rückmeldedaten", level: 1, icon: "treeDoc" },
  { label: "ASCII-Daten importieren", level: 1, icon: "treeDoc", selected: true },
  { label: "Personal-Management", level: 1, icon: "treeDoc" },
  { label: "Vorerfassung online/DATEV P", level: 1, icon: "treeDoc" },
  { label: "Bewegungsdaten", level: 0, icon: "treeFolder", toggle: "treeOpen" },
  { label: "Schnellerfassung", level: 1, icon: "treeDoc" },
  { label: "Erfassungstabellen", level: 1, icon: "treeDoc" },
  { label: "Vorschusstabelle", level: 1, icon: "treeDoc" },
  { label: "Sonstige Angaben", level: 1, icon: "treeFolder", toggle: "treeClosed" },
];

const PLACES = [
  { label: "lug_bewegungsdaten_k8wpI1EcEIDw", icon: "folder" },
  { label: "lug_bewegungsdaten_oWSMndA8xT", icon: "folder" },
  { label: "Dieser PC", icon: "monitor", root: true },
  { label: "3D-Objekte", icon: "objects3d" },
  { label: "Bilder", icon: "pictures" },
  { label: "Desktop", icon: "desktop" },
  { label: "Dokumente", icon: "documents" },
  { label: "Downloads", icon: "download" },
  { label: "Lokaler Datenträger (C: auf MacBook", icon: "drive" },
  { label: "Lokaler Datenträger (H: auf MacBook", icon: "drive" },
  { label: "Musik", icon: "music" },
  { label: "Videos", icon: "video" },
  { label: "Windows (C:)", icon: "winDrive" },
  { label: "Home (H:)", icon: "netDrive" },
  { label: "WINDVSW1 (L:)", icon: "netDrive" },
  { label: "Scan (Q:)", icon: "netDrive" },
  { label: "Netzwerk", icon: "network", root: true },
  { label: "Client", icon: "monitor", selected: true },
];

const FILES = [
  { name: "bewegungsdaten_lodas_oWSMndA8xT2d7SDnyfSD", date: "30.04.2025 10:22", type: "Textdokument", icon: "textFile", selected: true },
  { name: "lug_bewegungsdaten_oWSMndA8xT2d7SDnyfSD", date: "30.04.2025 10:57", type: "Dateiordner", icon: "folder" },
  { name: "Neuer Ordner mit Objekten", date: "30.04.2025 10:13", type: "Dateiordner", icon: "folder" },
];

const TOOLS = [
  ["newDoc", "openFolder", "closeFolder"],
  ["save", "print", "printPreview"],
  ["arrowRight", "card"],
  ["checkDoc"],
];

const SYSTEM_TASKS = [
  { icon: "windows", label: "Start" },
  { icon: "magnifier", label: "Suche" },
  { icon: "taskView", label: "Taskansicht" },
];

const APP_TASKS = [
  { icon: "explorer", label: "Explorer" },
  { icon: "firefox", label: "Firefox" },
  { icon: "edge", label: "Edge" },
  { icon: "swirl", label: "Arbeitsplatz", size: 44, open: true },
  { icon: "lodas", label: "LODAS", size: 44, open: true, active: true },
  { icon: "lohn", label: "Lohn", size: 44, open: true },
];

const TRAY = ["battery", "traffic", "userLeaf", "userNet", "question", "bluetooth", "muted"];

/* ---------- Sections ---------- */

const PayrollApp = () => (
  <AppWindow>
    <AppHeader>
      <Logo><Icon name="lodas" /></Logo>
      <HeaderText>
        <ClientTitle>5695973 / 99998 / T</ClientTitle>
        <MenuBar>
          <button>Mandant</button>
          <button>Mitarbeiter</button>
          <button>Be</button>
        </MenuBar>
      </HeaderText>
      <CaptionEdge />
    </AppHeader>

    <ToolRow>
      <Grip />
      <ToolGroup>
        {TOOLS.map((group, i) => (
          <React.Fragment key={i}>
            {i > 0 && <ToolDivider />}
            {group.map((name) => (
              <ToolButton key={name} aria-label={name}><Icon name={name} /></ToolButton>
            ))}
          </React.Fragment>
        ))}
      </ToolGroup>
    </ToolRow>
    <ToolRow>
      <Grip />
      <ToolGroup>
        <ToolButton><Icon name="feedback" />Feedback geben</ToolButton>
      </ToolGroup>
    </ToolRow>
    <ToolRow>
      <Grip />
      <ToolGroup>
        <ToolButton aria-label="Abrechnung"><Icon name="coins" /></ToolButton>
      </ToolGroup>
    </ToolRow>
    <ToolRow>
      <Grip />
      <MonthForm>
        <label htmlFor="month">Bearbeitungsmonat:</label>
        <MonthButton aria-label="Vormonat"><Icon name="triangleLeft" /></MonthButton>
        <MonthInput id="month" defaultValue="03/2025" />
        <CalendarButton aria-label="Kalender"><Icon name="calendar" /></CalendarButton>
      </MonthForm>
    </ToolRow>

    <AppBody>
      <Overview>
        <OverviewHead><span>Übersicht</span><i /></OverviewHead>
        <OverviewPanel>
          <Tab>Inhalt</Tab>
          <Tree>
            {TREE.map((n) => (
              <TreeRow key={n.label} $level={n.level}>
                <TreeToggle>{n.toggle && <Icon name={n.toggle} />}</TreeToggle>
                <Icon name={n.icon} />
                <TreeLabel $selected={n.selected}>{n.label}</TreeLabel>
              </TreeRow>
            ))}
          </Tree>
          <TreeScroll>
            <button aria-label="Nach links"><Icon name="chevronLeft" /></button>
            <i />
          </TreeScroll>
          <HistoryLabel>Historische Werte:</HistoryLabel>
          <HistoryBox>
            <HistoryTable>
              <thead>
                <tr><th>Gültig ab</th><th>keine Historie</th></tr>
              </thead>
            </HistoryTable>
          </HistoryBox>
        </OverviewPanel>
      </Overview>
      <Workspace />
    </AppBody>

    <StatusBar>
      <StatusMessage>Bereit</StatusMessage>
      <StatusCell $w={318}>Bearbeitungsmonat: 03/2025</StatusCell>
      <StatusCell $w={53} />
      <StatusCell $w={43} />
      <StatusCell $w={72}>NUM</StatusCell>
      <StatusCell $w={38} />
    </StatusBar>
  </AppWindow>
);

const OpenDialog = () => (
  <Dialog role="dialog" aria-label="Öffnen">
    <DialogTitle>
      <Icon name="lodas" size={32} />
      <h2>Öffnen</h2>
      <button aria-label="Schließen"><Icon name="close" /></button>
    </DialogTitle>

    <NavRow>
      <NavButton $w={58} aria-label="Zurück"><Icon name="back" /></NavButton>
      <NavButton $w={58} aria-label="Vorwärts"><Icon name="forward" /></NavButton>
      <NavButton $w={38} aria-label="Verlauf"><Icon name="chevronDown" size={14} /></NavButton>
      <NavButton $w={44} aria-label="Aufwärts"><Icon name="up" /></NavButton>
      <AddressBar>
        <Icon name="folder" />
        <Crumbs>
          <Icon name="chevronRight" />
          {["Netzwerk", "Client", "H$", "Downloads"].map((c) => (
            <React.Fragment key={c}>
              <Crumb>{c}</Crumb>
              <Icon name="chevronRight" />
            </React.Fragment>
          ))}
        </Crumbs>
        <NavButton $w={20} $color="#666" aria-label="Pfade"><Icon name="chevronDown" /></NavButton>
        <RefreshButton aria-label="Aktualisieren"><Icon name="refresh" /></RefreshButton>
      </AddressBar>
      <SearchBox>
        <input aria-label="Suche" placeholder={'"Downloads" durchsuchen'} />
        <Icon name="search" />
      </SearchBox>
    </NavRow>

    <CommandBar>
      <Command $after={60}><Label>Organisieren</Label><Icon name="caret" /></Command>
      <Command><Label>Neuer Ordner</Label></Command>
      <Spacer />
      <Command $gap={20} $after={42} aria-label="Ansicht"><Icon name="list" /><Icon name="caret" /></Command>
      <Command $after={40} aria-label="Vorschau"><Icon name="pane" /></Command>
      <Command aria-label="Hilfe"><Icon name="help" /></Command>
    </CommandBar>

    <DialogBody>
      <Places>
        {PLACES.map((p) => (
          <Place key={p.label} $root={p.root} $first={p.root} $selected={p.selected}>
            <button><Icon name={p.icon} /><Label>{p.label}</Label></button>
          </Place>
        ))}
      </Places>
      <VScroll>
        <button aria-label="Nach oben"><Icon name="chevronUp" /></button>
        <i />
        <button aria-label="Nach unten"><Icon name="scrollDown" /></button>
      </VScroll>
      <Files>
        <FileTable>
          <thead>
            <tr>
              <ColumnHead>Name</ColumnHead>
              <ColumnHead $divided>Änderungsdatum<Icon name="comboDown" size={14} /></ColumnHead>
              <ColumnHead $divided>Typ</ColumnHead>
            </tr>
          </thead>
          <FileRows>
            {FILES.map((f) => (
              <FileRow key={f.name} $selected={f.selected}>
                <td><Icon name={f.icon} /><Label>{f.name}</Label></td>
                <td>{f.date}</td>
                <td>{f.type}</td>
              </FileRow>
            ))}
          </FileRows>
        </FileTable>
        <HScroll>
          <button aria-label="Nach links"><Icon name="chevronLeft" /></button>
          <i />
          <button aria-label="Nach rechts"><Icon name="scrollRight" /></button>
        </HScroll>
      </Files>
    </DialogBody>

    <DialogFooter>
      <FooterRow $end={34} $gap={0}>
        <NameLabel htmlFor="filename">Dateiname:</NameLabel>
        <ComboBox>
          <input id="filename" defaultValue="bewegungsdaten_lodas_oWSMndA8xT2d7SDnyfSD" />
          <button aria-label="Dateinamen"><Icon name="comboDown" /></button>
        </ComboBox>
        <TypePicker>
          <select aria-label="Dateityp" defaultValue="txt">
            <option value="txt">LODAS-Importdaten (*.txt)</option>
          </select>
          <Icon name="comboDown" />
        </TypePicker>
      </FooterRow>
      <FooterRow $end={36} $gap={28}>
        <DialogButton $primary>Öffnen</DialogButton>
        <DialogButton>Abbrechen</DialogButton>
      </FooterRow>
      <SizeGrip><Icon name="sizeGrip" /></SizeGrip>
    </DialogFooter>
  </Dialog>
);

const TaskIcons = ({ tasks, gap }) => (
  <TaskGroup $gap={gap}>
    {tasks.map((t) => (
      <TaskButton key={t.icon} $open={t.open} $active={t.active} aria-label={t.label}>
        <Icon name={t.icon} size={t.size} />
      </TaskButton>
    ))}
  </TaskGroup>
);

export default function App() {
  return (
    <>
      <GlobalStyle />
      <Defs />
      <Page>
        <MacWindow>
          <MacTitleBar>
            <TrafficLights>
              <Light $color="#ed6a5f" aria-label="Schließen" />
              <Light $color="#f6be50" aria-label="Minimieren" />
              <Light $color="#62c555" aria-label="Maximieren" />
            </TrafficLights>
            <MacTitle>ASP Desktop</MacTitle>
          </MacTitleBar>
          <RemoteScreen>
            <PayrollApp />
            <Taskbar>
              <TaskIcons tasks={SYSTEM_TASKS} />
              <TaskIcons tasks={APP_TASKS} gap={2} />
              <Spacer />
              <Tray>
                {TRAY.map((name) => (
                  <button key={name} aria-label={name}><Icon name={name} /></button>
                ))}
              </Tray>
              <Clock>11:21<br />30.04.2025</Clock>
              <ShowDesktop aria-label="Desktop anzeigen" />
            </Taskbar>
            <HiddenWindow />
            <OpenDialog />
            <ConnectionTab aria-label="Verbindungsleiste">
              <i /><i /><i /><i /><i /><i />
            </ConnectionTab>
          </RemoteScreen>
        </MacWindow>
      </Page>
    </>
  );
}
